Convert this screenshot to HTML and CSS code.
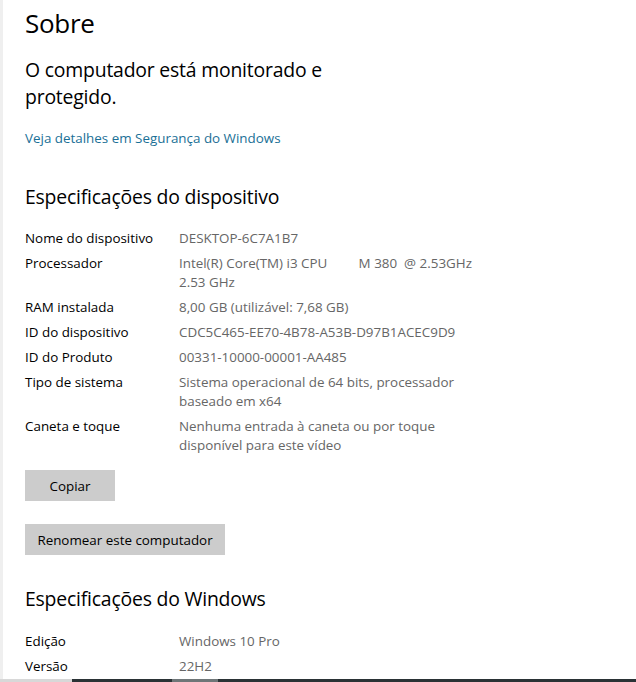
FILE: index.html
```html
<!DOCTYPE html>
<html lang="pt">
<head>
<meta charset="utf-8">
<title>Sobre</title>
<link rel="stylesheet" href="styles.css">
</head>
<body>
<div class="frame">
  <div class="edge"></div>
  <main class="content">
    <h1 class="title">Sobre</h1>
    <p class="status">O computador está monitorado e<br>protegido.</p>
    <a class="link" href="#">Veja detalhes em Segurança do Windows</a>

    <h2 class="section">Especificações do dispositivo</h2>
    <dl class="specs">
      <div class="row"><dt>Nome do dispositivo</dt><dd>DESKTOP-6C7A1B7</dd></div>
      <div class="row"><dt>Processador</dt><dd class="pre">Intel(R) Core(TM) i3 CPU         M 380  @ 2.53GHz
2.53 GHz</dd></div>
      <div class="row"><dt>RAM instalada</dt><dd>8,00 GB (utilizável: 7,68 GB)</dd></div>
      <div class="row"><dt>ID do dispositivo</dt><dd>CDC5C465-EE70-4B78-A53B-D97B1ACEC9D9</dd></div>
      <div class="row"><dt>ID do Produto</dt><dd>00331-10000-00001-AA485</dd></div>
      <div class="row"><dt>Tipo de sistema</dt><dd>Sistema operacional de 64 bits, processador baseado em x64</dd></div>
      <div class="row"><dt>Caneta e toque</dt><dd>Nenhuma entrada à caneta ou por toque disponível para este vídeo</dd></div>
    </dl>
    <div class="buttons">
      <button class="btn btn-copy">Copiar</button>
      <button class="btn btn-rename">Renomear este computador</button>
    </div>

    <h2 class="section section-win">Especificações do Windows</h2>
    <dl class="specs specs-win">
      <div class="row"><dt>Edição</dt><dd>Windows 10 Pro</dd></div>
      <div class="row"><dt>Versão</dt><dd>22H2</dd></div>
    </dl>
  </main>
</div>
<div class="taskbar">
  <span class="tb-a"></span><span class="tb-b"></span><span class="tb-c"></span><span class="tb-d"></span>
</div>
</body>
</html>
```

FILE: styles.css
```css
html, body {
  margin: 0;
  padding: 0;
  background: #ffffff;
}
body {
  width: 636px;
  height: 682px;
  overflow: hidden;
  font-family: "Open Sans", "Noto Sans", sans-serif;
  color: #000;
  display: flex;
  flex-direction: column;
}
.frame {
  flex: 1;
  display: flex;
  min-height: 0;
  overflow: hidden;
}
.edge {
  width: 3px;
  background: #efefef;
  flex: none;
}
.content {
  flex: 1;
  padding-left: 22px;
  padding-top: 4px;
}
.title {
  margin: 0;
  font-weight: 400;
  font-size: 26px;
  line-height: 38px;
  letter-spacing: -0.3px;
}
.status {
  margin: 14px 0 0;
  font-size: 19.4px;
  line-height: 27px;
  letter-spacing: -0.2px;
}
.link {
  display: block;
  margin-top: 19px;
  font-size: 13.4px;
  line-height: 19px;
  color: #1a6f96;
  text-decoration: none;
}
.section {
  margin: 35px 0 0;
  font-weight: 400;
  font-size: 19.4px;
  line-height: 27px;
  letter-spacing: -0.2px;
}
.section-win {
  margin-top: 30px;
}
.specs {
  margin: 19px 0 0;
  display: flex;
  flex-direction: column;
  gap: 6px;
  font-size: 13.4px;
  line-height: 19px;
}
.specs-win {
  margin-top: 20px;
}
.row {
  display: grid;
  grid-template-columns: 154px 300px;
}
.row dt {
  margin: 0;
}
.row dd {
  margin: 0;
  color: #666666;
}
.pre {
  white-space: pre;
}
.buttons {
  display: flex;
  flex-direction: column;
  align-items: flex-start;
  gap: 23px;
  margin-top: 15px;
}
.btn {
  border: none;
  background: #cccccc;
  font-family: inherit;
  font-size: 13.4px;
  color: #000;
  height: 31px;
  padding: 0;
}
.btn-copy { width: 90px; }
.btn-rename { width: 200px; }
.taskbar {
  height: 3px;
  display: flex;
  flex: none;
}
.tb-a { width: 72px; background: #d8d8d8; }
.tb-b { width: 100px; background: #2a3235; }
.tb-c { width: 46px; background: #6f7678; }
.tb-d { flex: 1; background: #2a3235; }
```
